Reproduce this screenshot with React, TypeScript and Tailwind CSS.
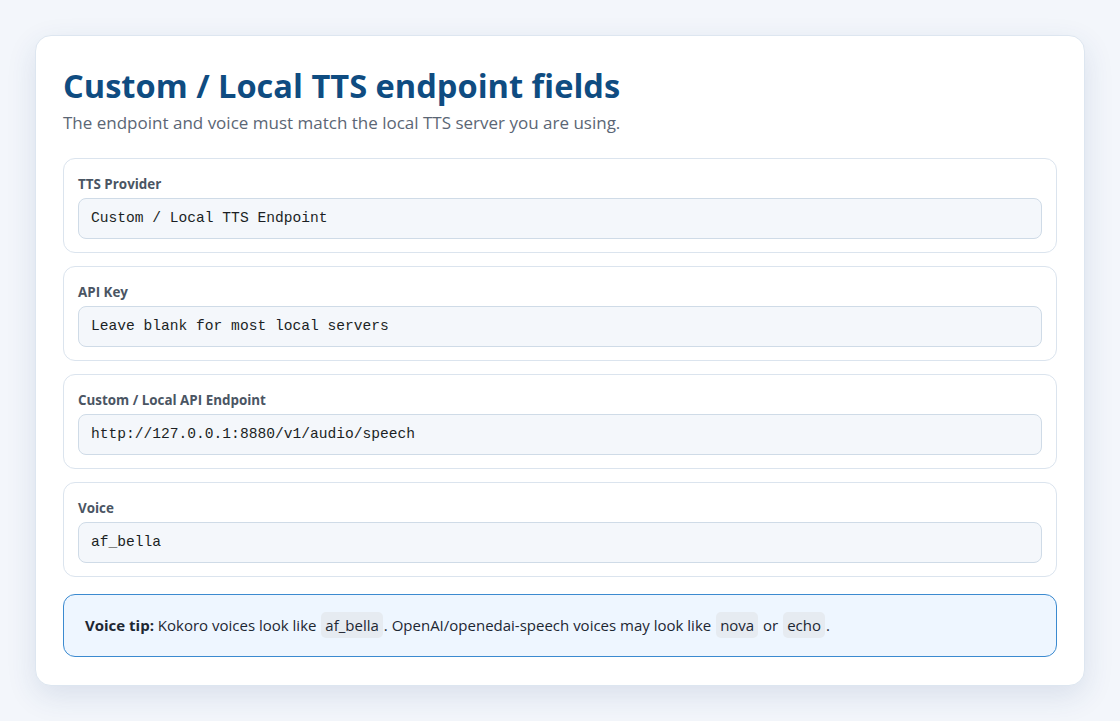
export default function App() {
  const fields = [
    { label: "TTS Provider", value: "Custom / Local TTS Endpoint" },
    { label: "API Key", value: "Leave blank for most local servers" },
    { label: "Custom / Local API Endpoint", value: "http://127.0.0.1:8880/v1/audio/speech" },
    { label: "Voice", value: "af_bella" },
  ];

  return (
    <main
      className="min-h-screen bg-[#f3f6fb] px-[35px] pt-[35px] pb-[36px]"
      style={{ fontFamily: '"Open Sans", "Noto Sans", sans-serif' }}
    >
      <section className="rounded-[16px] border border-[#dde6f0] bg-white px-[27px] pt-[28px] pb-[28px] shadow-[0_10px_30px_rgba(30,64,120,0.12)]">
        <h1 className="text-[32.6px] font-bold leading-[44px] text-[#0f4c81]">
          Custom / Local TTS endpoint fields
        </h1>
        <p className="mt-[3px] text-[17px] leading-[24px] text-[#5b6675]">
          The endpoint and voice must match the local TTS server you are using.
        </p>

        <div className="mt-[23px] flex flex-col gap-[13px]">
          {fields.map((f) => (
            <div key={f.label} className="rounded-[12px] border border-[#dbe4ee] px-[14px] pt-[16px] pb-[13px]">
              <div className="text-[13.4px] font-bold leading-[18px] text-[#4a5563]">{f.label}</div>
              <div
                className="mt-[5px] flex h-[41px] items-center rounded-[8px] border border-[#cfdbe7] bg-[#f4f7fb] px-[12px] text-[14.6px] text-[#1b1f24]"
                style={{ fontFamily: '"Liberation Mono", "DejaVu Sans Mono", monospace' }}
              >
                {f.value}
              </div>
            </div>
          ))}
        </div>

        <div className="mt-[17px] flex h-[63px] items-center rounded-[12px] border border-[#3b8ad0] bg-[#eef6ff] px-[21px] text-[15px] text-[#1d2733]">
          <span>
            <b>Voice tip:</b> Kokoro voices look like <Code>af_bella</Code>. OpenAI/openedai-speech voices may look like{" "}
            <Code>nova</Code> or <Code>echo</Code>.
          </span>
        </div>
      </section>
    </main>
  );
}

function Code({ children }: { children: string }) {
  return <span className="mx-px rounded-[5px] bg-[#e6ebf1] px-[4px] py-[3px]">{children}</span>;
}
